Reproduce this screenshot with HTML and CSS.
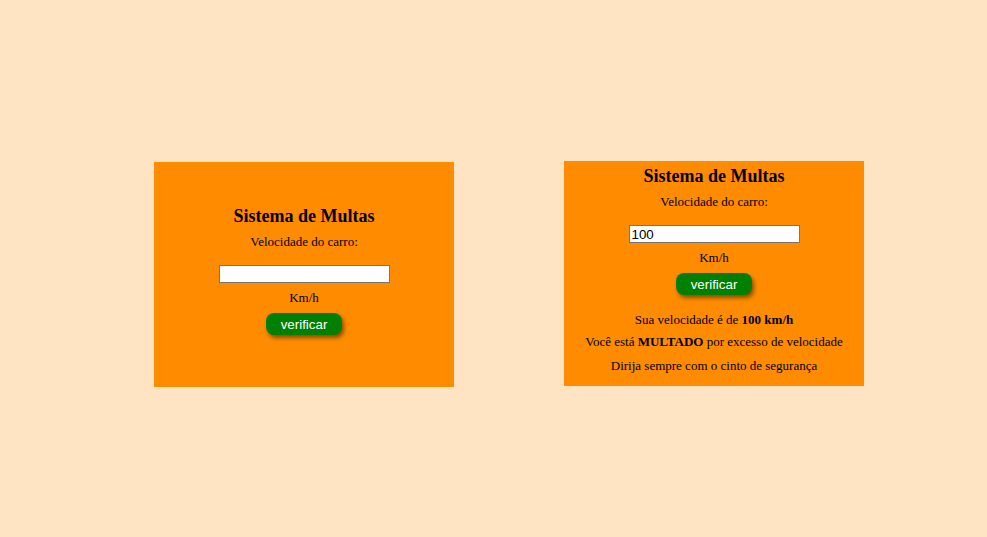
FILE: index.html
```html
<!DOCTYPE html>
<html lang="pt-BR">
<head>
<meta charset="utf-8">
<title>Sistema de Multas</title>
<link rel="stylesheet" href="styles.css">
</head>
<body>
<main class="page">
  <section class="card">
    <h3 class="title">Sistema de Multas</h3>
    <p class="label">Velocidade do carro:</p>
    <input class="field" type="text" value="">
    <p class="unit">Km/h</p>
    <button class="btn">verificar</button>
  </section>
  <section class="card card-result">
    <h3 class="title">Sistema de Multas</h3>
    <p class="label">Velocidade do carro:</p>
    <input class="field" type="text" value="100">
    <p class="unit">Km/h</p>
    <button class="btn">verificar</button>
    <p class="res res-first">Sua velocidade é de <strong>100 km/h</strong></p>
    <p class="res">Você está <strong>MULTADO</strong> por excesso de velocidade</p>
    <p class="res res-last">Dirija sempre com o cinto de segurança</p>
  </section>
</main>
</body>
</html>
```

FILE: styles.css
```css
html, body {
  margin: 0;
  padding: 0;
  background: #ffe4c4;
  height: 100%;
}
body {
  font-family: "Liberation Serif", "Times New Roman", serif;
  color: #000;
}
.page {
  display: flex;
  align-items: flex-start;
  gap: 110px;
  padding: 162px 0 0 154px;
}
.card {
  width: 300px;
  height: 225px;
  background: #ff8c00;
  display: flex;
  flex-direction: column;
  align-items: center;
  justify-content: center;
  padding-bottom: 8px;
  box-sizing: border-box;
  font-size: 13px;
}
.card-result {
  margin-top: -1px;
}
.title {
  font-size: 18px;
  font-weight: bold;
  line-height: 21px;
  margin: 0;
}
.label {
  margin: 7px 0 0;
  line-height: 15px;
}
.field {
  margin: 16px 0 0;
  width: 171px;
  height: 18px;
  box-sizing: border-box;
  border: 1px solid #767676;
  padding: 1px 2px;
  font-family: "Liberation Sans", Arial, sans-serif;
  font-size: 13.333px;
  color: #000;
  background: #fff;
}
.unit {
  margin: 7px 0 0;
  line-height: 15px;
}
.btn {
  margin: 8px 0 0;
  width: 76px;
  height: 22px;
  border: none;
  border-radius: 8px;
  background: #008000;
  color: #fff;
  font-family: "Liberation Sans", Arial, sans-serif;
  font-size: 13.333px;
  box-shadow: 2px 3px 4px rgba(0, 0, 0, 0.45);
  padding: 0;
}
.res {
  margin: 7px 0 0;
  line-height: 15px;
}
.res-first {
  margin-top: 17px;
}
.res-last {
  margin-top: 9px;
}
```
